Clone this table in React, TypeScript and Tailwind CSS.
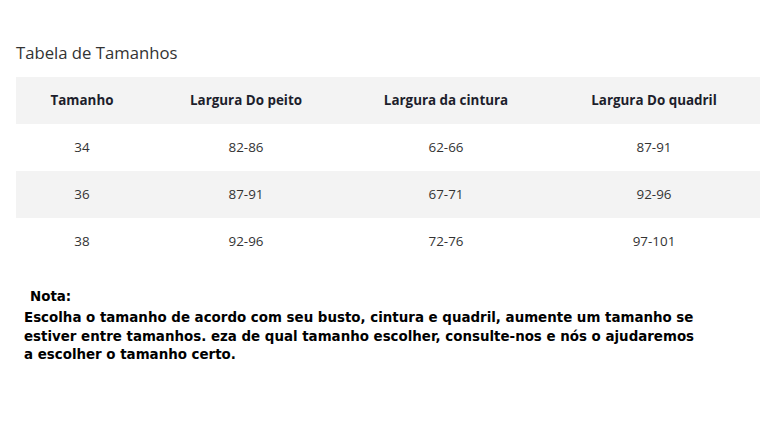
import React from "react";

const rows = [
  ["34", "82-86", "62-66", "87-91"],
  ["36", "87-91", "67-71", "92-96"],
  ["38", "92-96", "72-76", "97-101"],
];

export default function App() {
  return (
    <div className="w-[776px] h-[424px] bg-white overflow-hidden" style={{ fontFamily: '"Open Sans", "Noto Sans", sans-serif' }}>
      <div className="pt-[41px] pl-[16px] pr-[16px]">
        <h1 className="text-[16.7px] leading-[24px] text-[#333] font-normal">Tabela de Tamanhos</h1>
        <table className="mt-[12px] w-[744px] border-collapse table-fixed">
          <colgroup>
            <col className="w-[132px]" />
            <col className="w-[196px]" />
            <col className="w-[204px]" />
            <col className="w-[212px]" />
          </colgroup>
          <thead>
            <tr className="bg-[#f3f3f3] h-[47px]">
              {["Tamanho", "Largura Do peito", "Largura da cintura", "Largura Do quadril"].map((h) => (
                <th key={h} className="text-[13.4px] font-bold text-[#1d1e2c] text-center p-0">{h}</th>
              ))}
            </tr>
          </thead>
          <tbody>
            {rows.map((r, i) => (
              <tr key={i} className={i === 1 ? "bg-[#f3f3f3] h-[47px]" : "bg-white h-[47px]"}>
                {r.map((c, j) => (
                  <td key={j} className="text-[13.4px] text-[#333] text-center p-0">{c}</td>
                ))}
              </tr>
            ))}
          </tbody>
        </table>
      </div>
      <div className="pl-[24px] mt-[22px] text-[13.4px] font-bold text-black whitespace-nowrap" style={{ fontFamily: '"DejaVu Sans", sans-serif' }}>
        <div className="pl-[6px] leading-[19px]">Nota:</div>
        <div className="mt-[3px] leading-[18.5px]">
          Escolha o tamanho de acordo com seu busto, cintura e quadril, aumente um tamanho se
          <br />
          estiver entre tamanhos. eza de qual tamanho escolher, consulte-nos e nós o ajudaremos
          <br />
          a escolher o tamanho certo.
        </div>
      </div>
    </div>
  );
}
